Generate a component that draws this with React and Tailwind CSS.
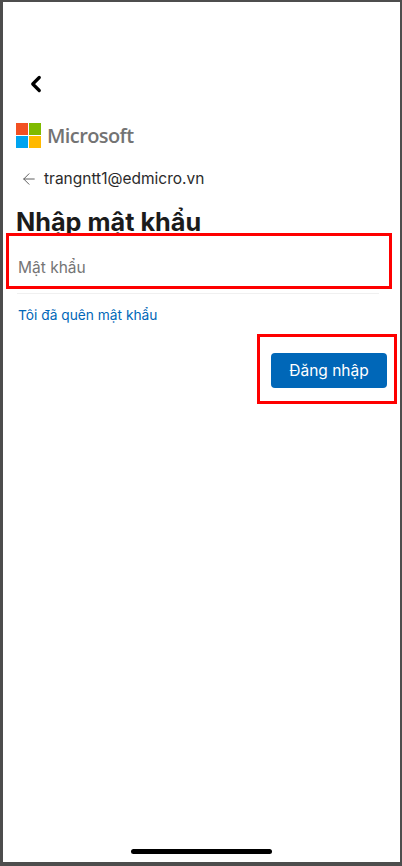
import React from 'react';
import { ChevronLeft, ArrowLeft } from 'lucide-react';

function MicrosoftLogo() {
  return (
    <svg width="25" height="25" viewBox="0 0 25 25" className="shrink-0">
      <rect x="0" y="0" width="12" height="12" fill="#f25022" />
      <rect x="13" y="0" width="12" height="12" fill="#7fba00" />
      <rect x="0" y="13" width="12" height="12" fill="#00a4ef" />
      <rect x="13" y="13" width="12" height="12" fill="#ffb900" />
    </svg>
  );
}

export default function App() {
  return (
    <div className="w-[402px] h-[866px] bg-[#4d4d4d] pl-[3px] pr-[2px] pb-[4px] pt-[2px] font-['Inter',sans-serif]">
      <div className="relative w-full h-full bg-white flex flex-col">
        {/* Back */}
        <div className="pt-[69px] pl-[20px] h-[121px]">
          <ChevronLeft className="w-[26px] h-[26px] text-black" strokeWidth={3} />
        </div>

        {/* Logo */}
        <div className="flex items-center gap-[6px] pl-[13px] h-[25px]">
          <MicrosoftLogo />
          <span className="text-[20px] leading-[25px] font-semibold tracking-[-0.6px] text-[#737373] font-['Open_Sans',sans-serif]">Microsoft</span>
        </div>

        {/* Account */}
        <div className="flex items-center gap-[6px] pl-[17px] mt-[20px] h-[22px]">
          <ArrowLeft className="w-[18px] h-[18px] text-[#555555]" strokeWidth={1.25} />
          <span className="text-[15.5px] leading-[22px] text-[#2b2b2b]">trangntt1@edmicro.vn</span>
        </div>

        <h1 className="pl-[13px] mt-[16px] text-[25.25px] leading-[32px] font-bold text-[#1b1b1b]">Nhập mật khẩu</h1>

        {/* Password */}
        <div className="ml-[14px] mr-[21px] mt-[5px] h-[51px] pt-[12px] border-b border-[#f0f0f0]">
          <span className="pl-[1px] text-[15.5px] leading-[24px] text-[#757575]">Mật khẩu</span>
        </div>

        <a className="pl-[15px] mt-[11px] text-[13.75px] leading-[20px] text-[#0067b8]">Tôi đã quên mật khẩu</a>

        <div className="flex justify-end pr-[13px] mt-[28px]">
          <button className="w-[116px] h-[35px] rounded-[4px] bg-[#0067b8] text-white text-[15.5px]">Đăng nhập</button>
        </div>

        {/* Annotation boxes */}
        <div className="absolute left-[3px] top-[231px] w-[386px] h-[56px] border-[3px] border-[#fe0000]"></div>
        <div className="absolute left-[254px] top-[332px] w-[140px] h-[70px] border-[3px] border-[#fe0000]"></div>

        {/* Home indicator */}
        <div className="absolute left-[128px] top-[847px] w-[141px] h-[5px] rounded-full bg-black"></div>
      </div>
    </div>
  );
}
